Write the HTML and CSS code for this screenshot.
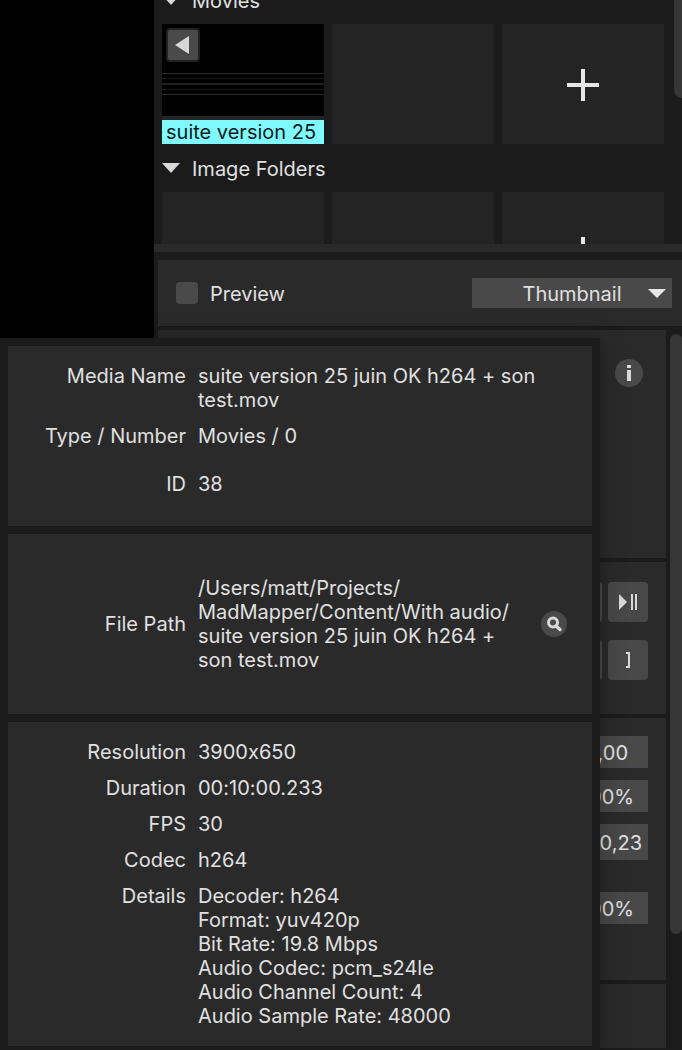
FILE: index.html
```html
<!DOCTYPE html>
<html lang="en">
<head>
<meta charset="utf-8">
<title>MadMapper</title>
<link rel="stylesheet" href="styles.css">
</head>
<body>
<div class="app">
  <div class="stage"></div>
  <main class="side">
    <section class="browser">
      <div class="browser-list">
        <h2 class="group-title"><svg class="caret" viewBox="0 0 18 10"><path d="M0 0H18L9 10Z"/></svg>Movies</h2>
        <div class="tiles">
          <div class="tile movie">
            <div class="thumb">
              <button class="back" aria-label="Previous"><svg width="16" height="18" viewBox="0 0 16 18"><path d="M14 0V18L0 9Z"/></svg></button>
              <div class="waves"><i></i><i class="dim"></i><i class="mid"></i><i class="dim"></i><i></i></div>
            </div>
            <div class="tile-name">suite version 25</div>
          </div>
          <div class="tile"></div>
          <button class="tile add" aria-label="Add movie"><svg width="32" height="32" viewBox="0 0 32 32"><path d="M14 0H18V14H32V18H18V32H14V18H0V14H14Z"/></svg></button>
        </div>
        <h2 class="group-title"><svg class="caret" viewBox="0 0 18 10"><path d="M0 0H18L9 10Z"/></svg>Image Folders</h2>
        <div class="tiles">
          <div class="tile"></div>
          <div class="tile"></div>
          <button class="tile add" aria-label="Add image folder"><svg width="32" height="32" viewBox="0 0 32 32"><path d="M14 0H18V14H32V18H18V32H14V18H0V14H14Z"/></svg></button>
        </div>
      </div>
      <div class="browser-scroll"></div>
    </section>
    <div class="splitter"></div>
    <div class="preview-bar">
      <label class="check"><input type="checkbox"><span>Preview</span></label>
      <div class="picker">
        <select aria-label="Preview mode"><option>Thumbnail</option></select>
        <svg class="picker-caret" width="18" height="9" viewBox="0 0 18 9"><path d="M0 0H18L9 9Z"/></svg>
      </div>
    </div>
    <div class="inspector">
      <div class="panels">
        <section class="panel media">
          <button class="round" aria-label="Media info"><svg width="28" height="28" viewBox="0 0 28 28"><path d="M12 6H16V9H12ZM12 11H16V22H12Z"/></svg></button>
        </section>
        <section class="panel transport">
          <div class="keys">
            <button class="key" aria-label="Play"></button>
            <button class="key" aria-label="Play or pause"><svg width="18" height="16" viewBox="0 0 18 16"><path d="M0 0L8 8L0 16ZM12 0H14V16H12ZM16 0H18V16H16Z"/></svg></button>
          </div>
          <div class="keys">
            <button class="key" aria-label="Set in point">[</button>
            <button class="key" aria-label="Set out point"><svg width="4" height="16" viewBox="0 0 4 16"><path d="M0 0H4V16H0V14H2V2H0Z"/></svg></button>
          </div>
        </section>
        <section class="panel values">
          <input class="value speed" aria-label="Speed" value="1,00">
          <input class="value percent" aria-label="Volume" value="100%">
          <input class="value time" aria-label="Out time" value="600,23">
          <input class="value percent last" aria-label="Level" value="100%">
        </section>
        <section class="panel extra"></section>
      </div>
      <div class="inspector-scroll"></div>
    </div>
  </main>

  <aside class="popup">
    <section class="card">
      <dl class="facts">
        <dt>Media Name</dt><dd>suite version 25 juin OK h264 + son test.mov</dd>
        <dt>Type / Number</dt><dd>Movies / 0</dd>
        <dt class="tall">ID</dt><dd class="tall">38</dd>
      </dl>
    </section>
    <section class="card path">
      <dl class="facts">
        <dt>File Path</dt><dd>/Users/matt/Projects/<br>MadMapper/Content/With audio/<br>suite version 25 juin OK h264 + son test.mov</dd>
      </dl>
      <button class="round small" aria-label="Reveal file"><svg width="26" height="26" viewBox="0 0 26 26"><circle cx="12" cy="11.500" r="4.500" fill="none" stroke="#d8d8d8" stroke-width="3"/><path d="M15 15L19 18.500" stroke="#d8d8d8" stroke-width="3.500" stroke-linecap="round"/></svg></button>
    </section>
    <section class="card">
      <dl class="facts">
        <dt>Resolution</dt><dd>3900x650</dd>
        <dt>Duration</dt><dd>00:10:00.233</dd>
        <dt>FPS</dt><dd>30</dd>
        <dt>Codec</dt><dd>h264</dd>
        <dt>Details</dt><dd>Decoder: h264<br>Format: yuv420p<br>Bit Rate: 19.8 Mbps<br>Audio Codec: pcm_s24le<br>Audio Channel Count: 4<br>Audio Sample Rate: 48000</dd>
      </dl>
    </section>
  </aside>
</div>
</body>
</html>
```

FILE: styles.css
```css
* {
  box-sizing: border-box;
}

body {
  margin: 0;
  background: #1b1b1b;
  color: #e0e0e0;
  font: 20px/24px Inter, "Liberation Sans", sans-serif;
  font-variant-ligatures: no-contextual;
}

button,
input,
select {
  margin: 0;
  padding: 0;
  border: 0;
  color: inherit;
  font: inherit;
}

svg {
  display: block;
  fill: #d8d8d8;
}

.app {
  position: relative;
  display: grid;
  grid-template-columns: 154px 1fr;
  height: 100vh;
  overflow: hidden;
}

.stage {
  background: #000;
}

.side {
  display: flex;
  flex-direction: column;
  min-width: 0;
}

/* Media browser, scrolled down by half a title row */
.browser {
  display: flex;
  flex: none;
  gap: 10px;
  height: 244px;
  overflow: hidden;
}

.browser-list {
  flex: 1;
  margin-top: -24px;
  padding-left: 8px;
}

.browser-scroll {
  width: 8px;
  height: 98px;
  border-bottom-left-radius: 8px;
  background: #363636;
}

.group-title {
  display: flex;
  align-items: center;
  gap: 12px;
  height: 48px;
  margin: 0;
  padding-top: 2px;
  font-size: 20px;
  font-weight: 400;
}

.caret {
  width: 18px;
  height: 10px;
  margin-bottom: 2px;
}

.tiles {
  display: grid;
  grid-template-columns: repeat(3, 1fr);
  gap: 8px;
}

.tile {
  display: flex;
  min-width: 0;
  height: 120px;
  background: #242424;
}

.tile.add {
  align-items: center;
  justify-content: center;
  padding-top: 2px;
}

.add svg,
.picker-caret {
  fill: #e6e6e6;
}

.movie {
  flex-direction: column;
  justify-content: space-between;
}

.thumb {
  height: 92px;
  padding: 4px;
  background: #000;
}

.back {
  display: flex;
  align-items: center;
  justify-content: center;
  width: 34px;
  height: 34px;
  border: 2px solid #222;
  border-radius: 4px;
  background: #4a4a4a;
}

.waves {
  display: grid;
  gap: 4px;
  margin: 11px -4px 0;
}

.waves i {
  height: 1px;
  background: #2a2a2a;
}

.waves .dim {
  background: #151515;
}

.waves .mid {
  height: 2px;
  background: #1e1e1e;
}

.tile-name {
  padding: 0 4px;
  overflow: hidden;
  background: #7ffbff;
  color: #0c1a1a;
  white-space: nowrap;
}

.splitter {
  flex: none;
  height: 8px;
  margin-bottom: 8px;
  background: #2a2a2a;
}

.preview-bar {
  display: flex;
  flex: none;
  align-items: center;
  justify-content: space-between;
  height: 66px;
  margin: 0 0 4px 4px;
  padding: 0 10px 0 18px;
  background: #2a2a2a;
}

.check {
  display: flex;
  align-items: center;
  gap: 12px;
}

.check span {
  padding-top: 2px;
}

.check input {
  width: 22px;
  height: 22px;
  border-radius: 4px;
  background: #4a4a4a;
  appearance: none;
}

.picker {
  display: grid;
  align-items: center;
  width: 200px;
}

.picker > * {
  grid-area: 1 / 1;
}

.picker select {
  width: 100%;
  height: 30px;
  padding-top: 2px;
  border-radius: 0;
  background: #494949;
  text-align: center;
  text-align-last: center;
  appearance: none;
}

.picker-caret {
  justify-self: end;
  margin-right: 6px;
  pointer-events: none;
}

/* Inspector column */
.inspector {
  display: flex;
  flex: 1;
  gap: 4px;
  min-height: 0;
  padding-left: 4px;
}

.inspector-scroll {
  width: 12px;
  height: 600px;
  margin-top: 4px;
  border-radius: 8px;
  background: #363636;
}

.panels {
  display: flex;
  flex: 1;
  flex-direction: column;
  gap: 4px;
}

.panel {
  display: flex;
  flex: none;
  flex-direction: column;
  align-items: flex-end;
  background: #2a2a2a;
}

.media {
  height: 228px;
  padding: 29px 23px;
}

.transport {
  gap: 18px;
  height: 152px;
  padding: 20px 18px;
}

.values {
  gap: 12px;
  height: 262px;
  padding: 18px;
}

.extra {
  height: 64px;
}

.keys {
  display: flex;
  gap: 6px;
}

.key {
  display: flex;
  align-items: center;
  justify-content: center;
  width: 40px;
  height: 40px;
  border-radius: 4px;
  background: #484848;
}

.value {
  width: 100px;
  height: 32px;
  padding-top: 2px;
  background: #484848;
  text-align: right;
}

.speed {
  padding-right: 20px;
}

.percent {
  padding-right: 14px;
}

.time {
  height: 36px;
  padding-right: 6px;
}

.last {
  margin-top: 20px;
}

.round {
  flex: none;
  width: 28px;
  height: 28px;
  border-radius: 50%;
  background: #494949;
}

.round.small {
  width: 26px;
  height: 26px;
}

/* Media info popup */
.popup {
  position: absolute;
  top: 338px;
  left: 0;
  display: grid;
  gap: 8px;
  width: 600px;
  padding: 8px;
  background: #1b1b1b;
  box-shadow: 0 0 24px rgba(0, 0, 0, 0.3);
}

.card {
  padding: 18px 25px 18px 0;
  background: #2a2a2a;
}

.path {
  display: flex;
  align-items: center;
  justify-content: space-between;
  height: 180px;
}

.path .facts {
  grid-template-columns: 178px 330px;
  align-items: center;
}

.facts {
  display: grid;
  grid-template-columns: 178px 1fr;
  gap: 12px;
  margin: 0;
}

.facts dt {
  text-align: right;
}

.facts dd {
  margin: 0;
}

.facts .tall {
  line-height: 48px;
}
```
